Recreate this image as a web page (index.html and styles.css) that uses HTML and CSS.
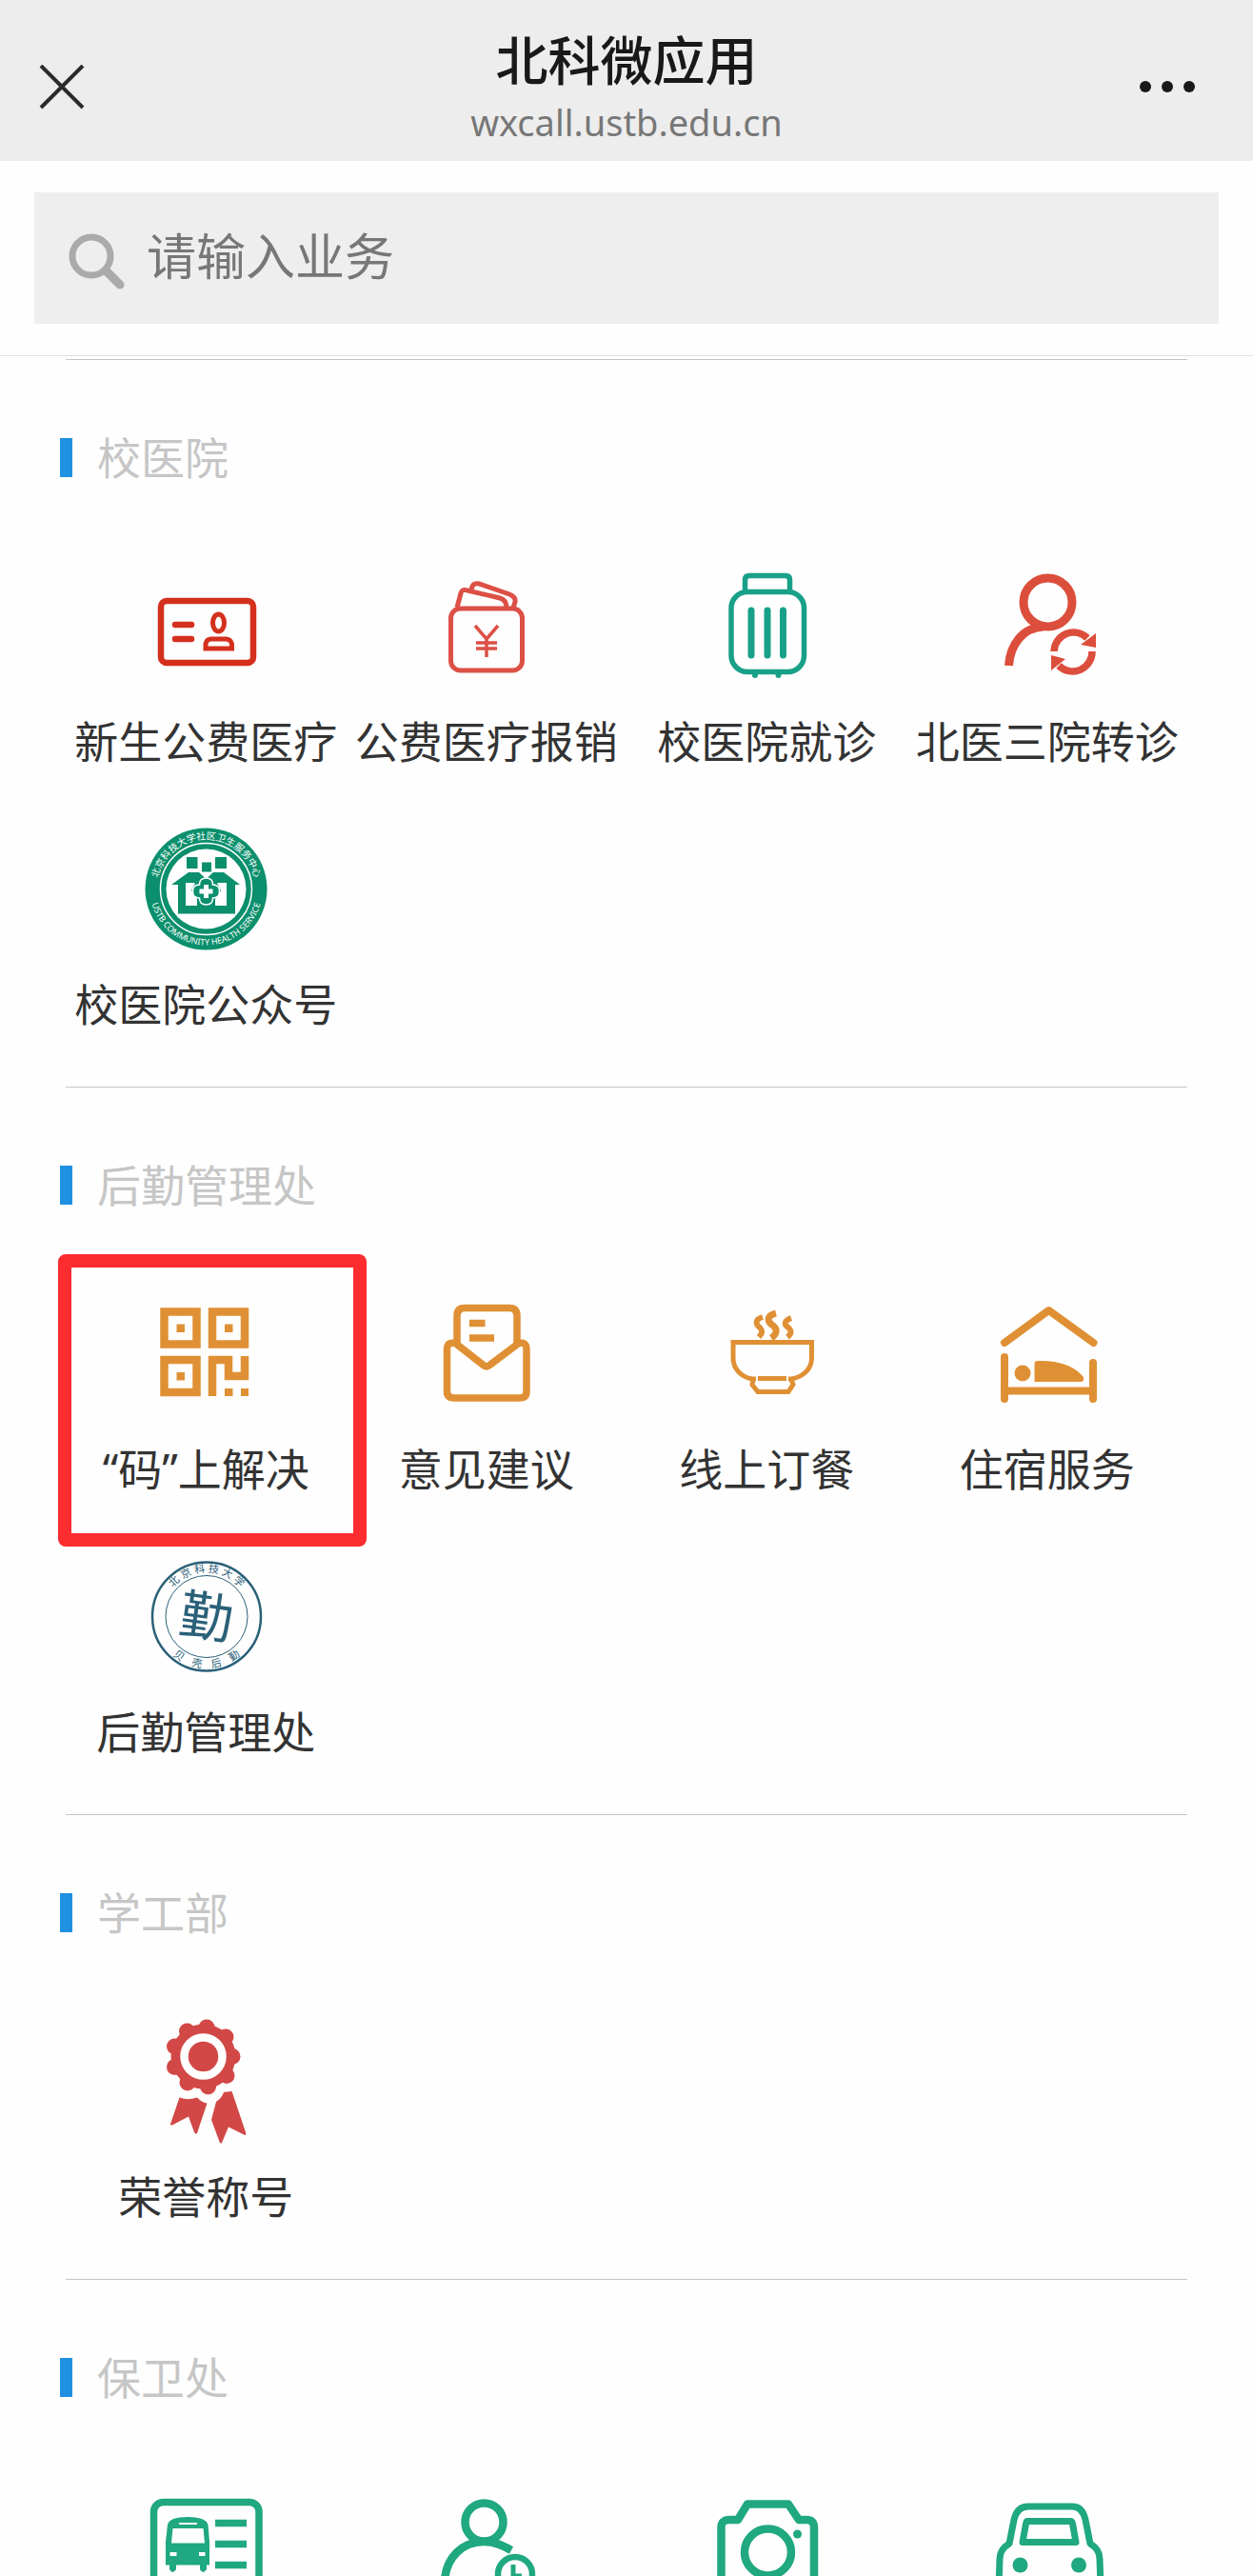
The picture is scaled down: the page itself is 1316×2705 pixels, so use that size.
FILE: index.html
```html
<!DOCTYPE html>
<html lang="zh-CN">
<head>
  <meta charset="UTF-8">
  <meta name="viewport" content="width=device-width, initial-scale=1.0">
  <title>北科微应用</title>
  <link rel="stylesheet" href="styles.css">
</head>
<body>
  <!-- 顶部导航 -->
  <header class="topbar">
    <button class="bar-btn" type="button" aria-label="关闭">
      <svg width="48" height="48" viewBox="0 0 48 48" fill="none" stroke="#2b2b2b" stroke-width="4"><path d="M2 1L46 45M46 1L2 45"/></svg>
    </button>
    <div class="bar-title">
      <h1>北科微应用</h1>
      <p>wxcall.ustb.edu.cn</p>
    </div>
    <button class="bar-btn" type="button" aria-label="更多">
      <svg width="60" height="48" viewBox="0 0 60 48" fill="#191919"><circle cx="7" cy="23" r="6"/><circle cx="30" cy="23" r="6"/><circle cx="53" cy="23" r="6"/></svg>
    </button>
  </header>

  <!-- 搜索 -->
  <form class="search">
    <label class="search-box">
      <svg class="search-icon" viewBox="0 0 60 60"><circle cx="24" cy="28" r="20" stroke-width="7"/><path d="M39 43L54 58" stroke-width="9" stroke-linecap="round"/></svg>
      <input type="text" placeholder="请输入业务" aria-label="请输入业务">
    </label>
  </form>

  <main>
    <section class="group">
      <h2>校医院</h2>
      <div class="apps">
        <a class="app" href="#">
          <svg class="icon red" viewBox="0 0 128 128" stroke-width="6.500">
            <rect x="17" y="38" width="97" height="65" rx="6"/>
            <path d="M32 63H49M32 78H49" stroke-linecap="round"/>
            <ellipse cx="77.500" cy="61" rx="6" ry="9" stroke-width="5"/>
            <path d="M64 88V83Q65 78 70 78H85Q90 78 91.500 83V88Z" stroke-width="5"/>
          </svg>
          <span>新生公费医疗</span>
        </a>
        <a class="app" href="#">
          <svg class="icon coral" viewBox="0 0 128 128" stroke-width="5">
            <rect x="26.500" y="46" width="75" height="65" rx="10"/>
            <path d="M33 45L37 30Q38 25 44 27L78 35Q85 37 85 45M48 27Q49 18 56 20L88 31Q95 34 94 39L92 45"/>
            <path d="M52 64L64 78L76 64M64 78V97M53 82H75M53 88H75" stroke-width="3.500"/>
          </svg>
          <span>公费医疗报销</span>
        </a>
        <a class="app" href="#">
          <svg class="icon teal" viewBox="0 0 128 128" stroke-width="5.500">
            <path d="M41.500 28V16Q41.500 11.500 46 11.500H84Q88.500 11.500 88.500 16V28"/>
            <rect x="27" y="28.500" width="76.500" height="84" rx="17"/>
            <path d="M48 48V95M65 48V95M81.500 48V95" stroke-width="7" stroke-linecap="round"/>
            <path d="M52 113V116M76.500 113V116" stroke-width="6" stroke-linecap="round"/>
          </svg>
          <span>校医院就诊</span>
        </a>
        <a class="app" href="#">
          <svg class="icon tomato" viewBox="0 0 128 128" stroke-width="9">
            <circle cx="64.500" cy="39.500" r="25.500"/>
            <path d="M23.500 106C25 84 38 66 60 65"/>
            <path d="M71 91A20.500 20.500 0 0 1 106 77M111 91A20.500 20.500 0 0 1 76 106" stroke-width="7.500"/>
            <path class="fill" d="M115 87V72L99 84ZM68 95V111L83 99Z"/>
          </svg>
          <span>北医三院转诊</span>
        </a>
        <a class="app" href="#">
          <svg class="icon seal" viewBox="0 0 128 128">
            <defs>
              <path id="healthTop" d="M12.500 64.500A52 52 0 0 1 116.500 64.500"/>
              <path id="healthBottom" d="M5.500 64.500A59 59 0 0 0 123.500 64.500"/>
            </defs>
            <circle cx="64.500" cy="64.500" r="64" fill="#0b8f6c"/>
            <circle cx="64.500" cy="64.500" r="48" fill="none" stroke="#fff" stroke-width="1.500"/>
            <circle cx="64.500" cy="64.500" r="42" fill="#fff"/>
            <text class="seal-cn" fill="#fff"><textPath href="#healthTop" startOffset="50%">北京科技大学社区卫生服务中心</textPath></text>
            <text class="seal-en" fill="#fff"><textPath href="#healthBottom" startOffset="50%">USTB COMMUNITY HEALTH SERVICE</textPath></text>
            <g fill="#0b8f6c">
              <path d="M44 31H55.500V43H44ZM60 36.500H70V46.500H60ZM74 31H86V43H74Z"/>
              <path d="M28 60L46 47H57L64.500 54L72 47H83L100 60H95V90.500H35V60Z"/>
            </g>
            <path d="M43 58H53L49 66L55 75V82H43ZM86 58H76L80 66L74 75V82H86Z" fill="#fff"/>
            <path d="M57.500 60Q57.500 53 64.500 53Q71.500 53 71.500 60Q78.500 60 78.500 67Q78.500 74 71.500 74Q71.500 81 64.500 81Q57.500 81 57.500 74Q50.500 74 50.500 67Q50.500 60 57.500 60Z" fill="#0b8f6c" stroke="#fff" stroke-width="1.500"/>
            <path d="M64.500 60V74M57.500 67H71.500" stroke="#fff" stroke-width="5"/>
          </svg>
          <span>校医院公众号</span>
        </a>
      </div>
    </section>

    <section class="group">
      <h2>后勤管理处</h2>
      <div class="apps">
        <a class="app marked" href="#">
          <svg class="icon orange" viewBox="0 0 128 128" stroke-width="8.500">
            <path d="M20.500 20.500H54.500V54.500H20.500ZM71 20.500H105V54.500H71ZM20.500 71H54.500V105H20.500Z"/>
            <path d="M71 109V71H88V88H105V67"/>
            <path class="fill" d="M33.500 33.500H42V42H33.500ZM84 33.500H92.500V42H84ZM33.500 84H42V92.500H33.500ZM84 101H92.500V109H84ZM101 101H109V109H101Z"/>
          </svg>
          <span>“码”上解决</span>
        </a>
        <a class="app" href="#">
          <svg class="icon orange" viewBox="0 0 128 128" stroke-width="7.500">
            <path d="M33 54V25Q33 16.500 41 16.500H88Q96 16.500 96 25V54"/>
            <path d="M32 54L60 76Q64 79.500 68 76L97 54Q106 51 106 60V104Q106 111 99 111H30Q22.500 111 22.500 104V60Q22.500 51 32 54Z"/>
            <path d="M46 32.500H62.500M46 48H72"/>
          </svg>
          <span>意见建议</span>
        </a>
        <a class="app" href="#">
          <svg class="icon orange" viewBox="0 0 128 128" stroke-width="5">
            <path d="M53 91H49C37 89 29 80 29 69V52.500H111.500V69C111.500 80 103 89 90 91H87M50 91L49 97L55 104.500H87L92 97L90 91"/>
            <path d="M55 90.500H85"/>
            <path d="M60 26C50 29 54 35 57 37C61 41 59 44 56 47M90 27C80 31 84 35 87 37C91 41 90 44 86 47" stroke-width="6"/>
            <path d="M74 22C62 25 66 32 71 35C76 39 75 44 69 48" stroke-width="7"/>
          </svg>
          <span>线上订餐</span>
        </a>
        <a class="app" href="#">
          <svg class="icon orange" viewBox="0 0 128 128" stroke-width="8" stroke-linecap="round" stroke-linejoin="round">
            <path d="M19 53L65.500 19L112.500 53"/>
            <path d="M19 68V112M112 74V112M19 103.500H112"/>
            <circle class="fill" cx="38" cy="85" r="8.500"/>
            <path class="fill" d="M50.500 75Q50.500 72 54 72Q87 71 102 89Q103 94 99 94H50.500Z"/>
          </svg>
          <span>住宿服务</span>
        </a>
        <a class="app" href="#">
          <svg class="icon seal" viewBox="0 0 128 128">
            <defs>
              <path id="logTop" d="M18.500 64.500A46.500 46.500 0 0 1 111.500 64.500"/>
              <path id="logBottom" d="M11 64.500A54 54 0 0 0 119 64.500"/>
            </defs>
            <g fill="none" stroke="#2a6078">
              <circle cx="65" cy="64.500" r="57" stroke-width="2.500"/>
              <circle cx="65" cy="64.500" r="43"/>
            </g>
            <g fill="#2a6078">
              <text class="seal-name"><textPath href="#logTop" startOffset="50%">北 京 科 技 大 学</textPath></text>
              <text class="seal-name"><textPath href="#logBottom" startOffset="50%">贝　壳　后　勤</textPath></text>
              <text class="seal-mark" x="65" y="85" transform="rotate(8 65 64)">勤</text>
            </g>
          </svg>
          <span>后勤管理处</span>
        </a>
      </div>
    </section>

    <section class="group">
      <h2>学工部</h2>
      <div class="apps">
        <a class="app" href="#">
          <svg class="icon medal" viewBox="0 0 128 128">
            <circle cx="61.500" cy="38.500" r="34"/>
            <g>
              <circle cx="92" cy="38.500" r="8.500"/><circle cx="85" cy="18" r="8.500"/><circle cx="65" cy="8" r="8.500"/>
              <circle cx="44.500" cy="12" r="8.500"/><circle cx="31.500" cy="28" r="8.500"/><circle cx="31.500" cy="49.500" r="8.500"/>
              <circle cx="45" cy="66" r="8.500"/><circle cx="66.500" cy="70" r="8.500"/><circle cx="86" cy="58.500" r="8.500"/>
            </g>
            <circle cx="61.500" cy="38.500" r="20" fill="none" stroke="#fff" stroke-width="8.500"/>
            <path d="M36.500 81.500Q45 85 55 81.500Q60 87 65.500 87.500L55 119Q53.500 121 52 118L46 101.500L29 110.500Q26 111 27.500 108Z"/>
            <path d="M83 76L91.500 75L106 118Q107 122 104 120.500L88 112.500L81 129Q80 131 78.500 128L70 105L75 86Q81 82 83 76Z"/>
          </svg>
          <span>荣誉称号</span>
        </a>
      </div>
    </section>

    <section class="group">
      <h2>保卫处</h2>
      <div class="apps">
        <a class="app" href="#" aria-label="校车">
          <svg class="icon green" viewBox="0 0 128 128" stroke-width="7.500">
            <rect x="9.500" y="18.500" width="110.500" height="96" rx="10"/>
            <path d="M74 40.500H107M74 62.500H107M74 84.500H107"/>
            <path class="fill" fill-rule="evenodd" d="M24 42Q26 34 45 34Q64 34 66.500 42L68 60V84.500H65V89Q61 95 58 89V84.500H33V89Q29 95 26 89V84.500H22V60ZM29.500 46L28 61.500H63L61.500 46ZM26.500 71V75H33.500V71ZM57 71V75H63.500V71ZM36 40V42H55V40Z"/>
          </svg>
        </a>
        <a class="app" href="#" aria-label="访客">
          <svg class="icon green" viewBox="0 0 128 128" stroke-width="8.500">
            <circle cx="61.500" cy="39.500" r="20"/>
            <path d="M20 100C22 77 38 60 61 60C73 60 81 64 90 69"/>
            <circle cx="94" cy="94" r="18" stroke-width="6.500"/>
            <path d="M92 84V96H101" stroke-width="5"/>
          </svg>
        </a>
        <a class="app" href="#" aria-label="拍照">
          <svg class="icon green" viewBox="0 0 128 128" stroke-width="8.500" stroke-linejoin="round">
            <path d="M16.500 110V45Q16.500 37 25 37H34L44 20.500H87L98 37H106Q114 37 114 45V110Z"/>
            <circle cx="65.500" cy="71" r="24.500"/>
            <circle class="fill" cx="96.500" cy="52" r="4.500"/>
          </svg>
        </a>
        <a class="app" href="#" aria-label="车辆">
          <svg class="icon green" viewBox="0 0 128 128" stroke-width="7" stroke-linejoin="round">
            <path d="M13 108L14 78Q14 68 24 62L29 37Q32 23 44 23H90Q101 23 104 37L109 62Q119 68 119 78L120 108Z"/>
            <path d="M43 38.500H88Q90 38.500 90.500 41L94 60.500H38L41.500 41Q42 38.500 43 38.500Z"/>
            <circle class="fill" cx="35.500" cy="84.500" r="8"/><circle class="fill" cx="97" cy="84.500" r="8"/>
          </svg>
        </a>
      </div>
    </section>
  </main>
</body>
</html>
```

FILE: styles.css
```css
*,
*::before,
*::after {
  box-sizing: border-box;
}

body {
  margin: 0;
  height: 100vh;
  overflow: hidden;
  font-family: "Noto Sans", "Noto Sans CJK SC", sans-serif;
  background-color: #fefefe;
  color: #333;
}

h1, h2, p {
  margin: 0;
  font-weight: normal;
}

/* 顶部导航 */
.topbar {
  display: flex;
  align-items: center;
  justify-content: space-between;
  height: 169px;
  padding: 14px 36px 0 36px;
  background-color: #ededed;
}

.bar-btn {
  display: flex;
  width: 120px;
  padding: 0 5px;
  border: 0;
  background: none;
}

.bar-btn:last-child {
  justify-content: flex-end;
  padding: 0 24px;
}

.bar-title {
  text-align: center;
}

.bar-title h1 {
  font-size: 55px;
  line-height: 72px;
  font-weight: 500;
  color: #191919;
}

.bar-title p {
  font-size: 38px;
  line-height: 58px;
  color: #777;
}

/* 搜索 */
.search {
  padding: 33px 36px;
  border-bottom: 1px solid #e0e0e0;
}

.search-box {
  display: flex;
  align-items: center;
  gap: 22px;
  height: 138px;
  padding: 0 36px;
  background-color: #eee;
}

.search-icon {
  width: 60px;
  height: 60px;
  overflow: visible;
  fill: none;
  stroke: #aaa;
}

.search-box input {
  flex: 1;
  min-width: 0;
  padding: 0 0 6px;
  border: 0;
  outline: 0;
  background: none;
  font-family: inherit;
  font-size: 52px;
  color: #333;
}

.search-box input::placeholder {
  color: #777;
  opacity: 1;
}

/* 业务分组 */
main {
  padding: 3px 69px;
}

.group {
  padding: 69px 0 54px;
  border-top: 1px solid #c6c6c6;
}

.group h2 {
  display: flex;
  align-items: center;
  gap: 26px;
  margin: 0 0 80px -6px;
  font-size: 46px;
  line-height: 66px;
  color: #c6c6c6;
}

.group h2::before {
  content: "";
  width: 13px;
  height: 41px;
  background-color: #2090e0;
}

.apps {
  display: grid;
  grid-template-columns: repeat(4, 1fr);
  row-gap: 58px;
}

.app {
  position: relative;
  display: flex;
  flex-direction: column;
  align-items: center;
  gap: 24px;
  font-size: 46px;
  line-height: 66px;
  white-space: nowrap;
  color: #333;
  text-decoration: none;
}

/* 红框标记 */
.marked::after {
  content: "";
  position: absolute;
  top: -40px;
  left: -8px;
  width: 324px;
  height: 307px;
  border: 14px solid #fc2c2f;
  border-radius: 8px;
}

/* 图标 */
.icon {
  width: 128px;
  height: 128px;
  overflow: visible;
  fill: none;
  stroke: currentColor;
}

.icon .fill {
  fill: currentColor;
  stroke: none;
}

.icon.seal {
  stroke: none;
}

.icon.medal {
  fill: #d24846;
  stroke: none;
}

.red { color: #d4301e; }
.coral { color: #dc5046; }
.teal { color: #18a088; }
.tomato { color: #dc4e3c; }
.orange { color: #e09034; }
.green { color: #20a880; }

/* 印章文字 */
.seal text {
  text-anchor: middle;
}

.seal-cn {
  font-size: 10px;
}

.seal-en {
  font-size: 9px;
}

.seal-name {
  font-size: 11px;
}

.seal-mark {
  font-family: "Noto Sans CJK TC", sans-serif;
  font-size: 56px;
}
```
